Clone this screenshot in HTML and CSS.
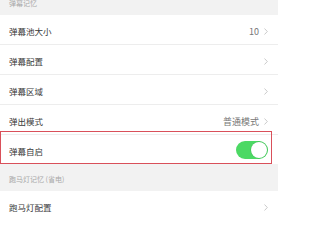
FILE: index.html
```html
<!DOCTYPE html>
<html lang="zh">
<head>
<meta charset="utf-8">
<link rel="stylesheet" href="styles.css">
</head>
<body>
<div class="page">
  <div class="section-title">弹幕记忆</div>
  <div class="group">
    <div class="row"><span class="label">弹幕池大小</span><span class="extra"><span class="value">10</span><svg class="chev" viewBox="0 0 4 7"><path d="M0.5 0.5 L3.3 3.5 L0.5 6.5"/></svg></span></div>
    <div class="row"><span class="label">弹幕配置</span><span class="extra"><svg class="chev" viewBox="0 0 4 7"><path d="M0.5 0.5 L3.3 3.5 L0.5 6.5"/></svg></span></div>
    <div class="row"><span class="label">弹幕区域</span><span class="extra"><svg class="chev" viewBox="0 0 4 7"><path d="M0.5 0.5 L3.3 3.5 L0.5 6.5"/></svg></span></div>
    <div class="row"><span class="label">弹出模式</span><span class="extra"><span class="value">普通模式</span><svg class="chev" viewBox="0 0 4 7"><path d="M0.5 0.5 L3.3 3.5 L0.5 6.5"/></svg></span></div>
    <div class="row row-highlight"><span class="label">弹幕自启</span><span class="switch"><span class="knob"></span></span><span class="mark"></span></div>
  </div>
  <div class="section-title">跑马灯记忆 (省电)</div>
  <div class="group">
    <div class="row"><span class="label">跑马灯配置</span><span class="extra"><svg class="chev" viewBox="0 0 4 7"><path d="M0.5 0.5 L3.3 3.5 L0.5 6.5"/></svg></span></div>
  </div>
</div>
</body>
</html>
```
FILE: styles.css
```css
html, body {
  margin: 0;
  padding: 0;
  background: #ffffff;
}
body {
  font-family: "Noto Sans CJK SC", "Noto Sans", sans-serif;
  overflow: hidden;
}
.page {
  width: 278px;
  margin-top: -12px;
}
.section-title {
  height: 27px;
  box-sizing: border-box;
  background: #f2f2f2;
  color: #a8a8a8;
  font-size: 7px;
  line-height: 10px;
  padding: 10px 0 0 9px;
}
.group {
  background: #ffffff;
}
.row {
  position: relative;
  height: 30px;
  box-sizing: border-box;
  border-bottom: 1px solid #ededed;
  display: flex;
  align-items: center;
  justify-content: space-between;
  padding: 3px 10px 0 9px;
}
.row:last-child {
  border-bottom: none;
  height: 29px;
}
.label {
  font-size: 8.5px;
  color: #3a3a3a;
}
.extra {
  display: flex;
  align-items: center;
  gap: 5px;
}
.value {
  font-size: 9px;
  color: #777777;
}
.chev {
  width: 4px;
  height: 7px;
  fill: none;
  stroke: #bdbdbd;
  stroke-width: 0.8;
}
.switch {
  width: 32px;
  height: 18px;
  border-radius: 9px;
  background: #4cd964;
  display: flex;
  justify-content: flex-end;
  align-items: center;
  padding: 1px;
  box-sizing: border-box;
  margin-top: -3px;
}
.knob {
  width: 16px;
  height: 16px;
  border-radius: 50%;
  background: #ffffff;
  box-shadow: 0 0 0 0.5px #3fb955;
}
.mark {
  position: absolute;
  left: 0;
  top: -4px;
  right: 6px;
  bottom: 0;
  border: 1px solid #d9505a;
  pointer-events: none;
}
```
